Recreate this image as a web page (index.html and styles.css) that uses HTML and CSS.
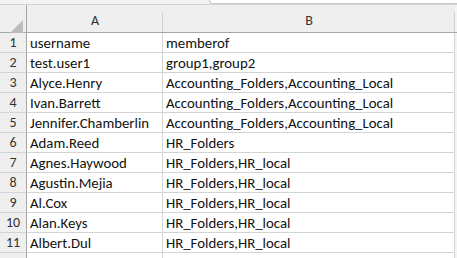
FILE: index.html
```html
<!DOCTYPE html>
<html>
<head>
<meta charset="utf-8">
<link rel="stylesheet" href="styles.css">
</head>
<body>
<div class="app">
  <div class="topbar"><div class="formula"></div></div>
  <div class="sheet">
    <div class="hdr corner"><svg class="tri" width="14" height="14" viewBox="0 0 14 14"><polygon points="13,0 13,13 0,13" fill="#bcbcbc"/></svg></div>
    <div class="hdr col">A</div>
    <div class="hdr col">B</div>
    <div class="edge hdr-edge"></div>

    <div class="rn">1</div><div class="c">username</div><div class="c">memberof</div><div class="edge"></div>
    <div class="rn">2</div><div class="c">test.user1</div><div class="c">group1,group2</div><div class="edge"></div>
    <div class="rn">3</div><div class="c">Alyce.Henry</div><div class="c">Accounting_Folders,Accounting_Local</div><div class="edge"></div>
    <div class="rn">4</div><div class="c">Ivan.Barrett</div><div class="c">Accounting_Folders,Accounting_Local</div><div class="edge"></div>
    <div class="rn">5</div><div class="c">Jennifer.Chamberlin</div><div class="c">Accounting_Folders,Accounting_Local</div><div class="edge"></div>
    <div class="rn">6</div><div class="c">Adam.Reed</div><div class="c">HR_Folders</div><div class="edge"></div>
    <div class="rn">7</div><div class="c">Agnes.Haywood</div><div class="c">HR_Folders,HR_local</div><div class="edge"></div>
    <div class="rn">8</div><div class="c">Agustin.Mejia</div><div class="c">HR_Folders,HR_local</div><div class="edge"></div>
    <div class="rn">9</div><div class="c">Al.Cox</div><div class="c">HR_Folders,HR_local</div><div class="edge"></div>
    <div class="rn">10</div><div class="c">Alan.Keys</div><div class="c">HR_Folders,HR_local</div><div class="edge"></div>
    <div class="rn">11</div><div class="c">Albert.Dul</div><div class="c">HR_Folders,HR_local</div><div class="edge"></div>
    <div class="rn"></div><div class="c"></div><div class="c"></div><div class="edge"></div>
  </div>
</div>
</body>
</html>
```

FILE: styles.css
```css
html, body {
  margin: 0;
  padding: 0;
  background: #ffffff;
}
.app {
  width: 457px;
  height: 258px;
  overflow: hidden;
  font-family: Carlito, Lato, "Liberation Sans", sans-serif;
}
.topbar {
  height: 4px;
  background: #f3f3f3;
  border-bottom: 1px solid #d4d4d4;
  display: flex;
}
.formula {
  margin-left: 209px;
  flex: 1;
  height: 3px;
  background: #ffffff;
  border-left: 1px solid #c8c8c8;
  border-bottom: 1px solid #c8c8c8;
  border-bottom-left-radius: 3px;
}
.sheet {
  display: grid;
  grid-template-columns: 27px 136px 292px 2px;
  grid-auto-rows: 20px;
  grid-template-rows: 28px;
}
.hdr {
  background: #efefef linear-gradient(#d0d0d0, #d0d0d0) right bottom / 1px 20px no-repeat;
  border-bottom: 1px solid #a6a6a6;
  box-sizing: border-box;
}
.corner {
  background: #efefef;
  border-right: 1px solid #a6a6a6;
  position: relative;
}
.tri {
  position: absolute;
  left: 10px;
  top: 15px;
}
.col {
  font-size: 14px;
  color: #333333;
  text-align: center;
  line-height: 26px;
  padding-top: 3px;
}
.hdr-edge {
  background: #efefef;
  border-bottom: 1px solid #a6a6a6;
  box-sizing: border-box;
}
.edge {
  background: #f4f4f4;
}
.rn {
  background: #efefef;
  border-right: 1px solid #a6a6a6;
  border-bottom: 1px solid #d4d4d4;
  box-sizing: border-box;
  font-size: 14px;
  color: #333333;
  text-align: center;
  line-height: 20px;
}
.c {
  border-right: 1px solid #d4d4d4;
  border-bottom: 1px solid #d4d4d4;
  box-sizing: border-box;
  font-size: 14.8px;
  color: #111111;
  padding-left: 3px;
  line-height: 20px;
  white-space: nowrap;
  overflow: hidden;
}
```
